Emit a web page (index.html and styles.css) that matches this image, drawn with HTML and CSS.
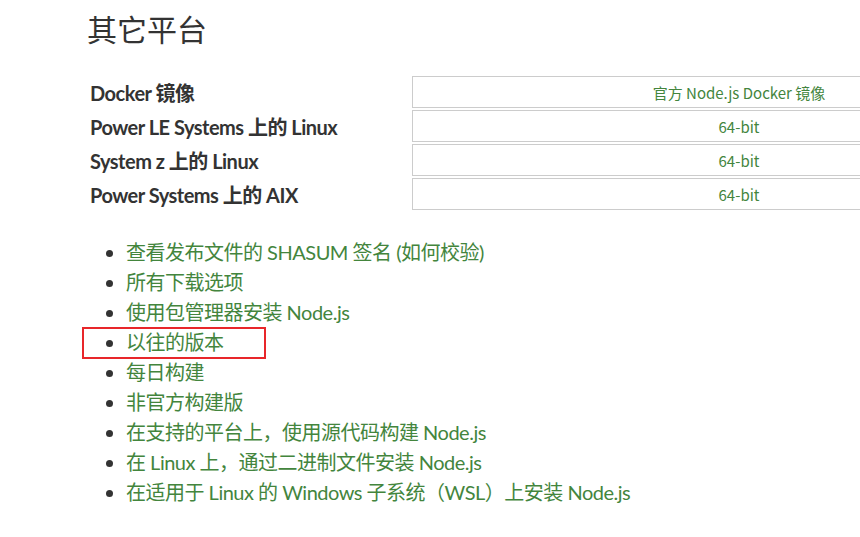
FILE: index.html
```html
<!DOCTYPE html>
<html>
<head>
    <title>其它平台 - Node.js</title>
    <meta charset="utf-8">
    <meta name="viewport" content="width=device-width, initial-scale=1.0">
    <link rel="stylesheet" href="styles.css">
</head>
<body>
    <div id="container">
        <h2>其它平台</h2>

        <table class="platforms">
            <tr>
                <th>Docker 镜像</th>
                <td><a href="#">官方 Node.js Docker 镜像</a></td>
            </tr>
            <tr>
                <th>Power LE Systems 上的 Linux</th>
                <td><a href="#">64-bit</a></td>
            </tr>
            <tr>
                <th>System z 上的 Linux</th>
                <td><a href="#">64-bit</a></td>
            </tr>
            <tr>
                <th>Power Systems 上的 AIX</th>
                <td><a href="#">64-bit</a></td>
            </tr>
        </table>

        <ul class="links">
            <li><a href="#">查看发布文件的 SHASUM 签名</a> <a href="#">(如何校验)</a></li>
            <li><a href="#">所有下载选项</a></li>
            <li><a href="#">使用包管理器安装 Node.js</a></li>
            <li class="marked"><a href="#">以往的版本</a></li>
            <li><a href="#">每日构建</a></li>
            <li><a href="#">非官方构建版</a></li>
            <li><a href="#">在支持的平台上，使用源代码构建 Node.js</a></li>
            <li><a href="#">在 Linux 上，通过二进制文件安装 Node.js</a></li>
            <li><a href="#">在适用于 Linux 的 Windows 子系统（WSL）上安装 Node.js</a></li>
        </ul>
    </div>
</body>
</html>
```

FILE: styles.css
```css
body {
    margin: 0;
    background-color: white;
    font-family: "Noto Sans CJK SC", "Noto Sans", sans-serif;
    color: #333;
    overflow: hidden;
}

a {
    color: #43853d;
    text-decoration: none;
}

#container {
    padding: 0 0 0 87px;
}

h2 {
    margin: 0;
    padding-top: 8px;
    font-size: 30px;
    font-weight: 400;
    line-height: 40px;
}

.platforms {
    width: 980px;
    margin-top: 26px;
    margin-left: 1px;
    table-layout: fixed;
    border-collapse: separate;
    border-spacing: 2px;
    font-family: Lato, "Noto Sans CJK SC", sans-serif;
    font-size: 20px;
}

.platforms th {
    width: 320px;
    padding: 0;
    text-align: left;
    font-weight: 700;
    letter-spacing: -0.5px;
    white-space: nowrap;
}

.platforms td {
    height: 30px;
    padding: 0;
    border: 1px solid #ccc;
    text-align: center;
    font-family: "Noto Sans CJK SC", sans-serif;
    font-size: 15px;
}

.links {
    margin: 25px 0 0;
    padding-left: 39px;
    font-family: Lato, "Noto Sans CJK SC", sans-serif;
    font-size: 20px;
    line-height: 30px;
    letter-spacing: -0.5px;
}

/* red box drawn over the item, as in the annotated screenshot */
.marked {
    position: relative;
}

.marked::before {
    content: "";
    position: absolute;
    left: -44px;
    top: 0;
    width: 180px;
    height: 28px;
    border: 2px solid #e8262a;
}
```
